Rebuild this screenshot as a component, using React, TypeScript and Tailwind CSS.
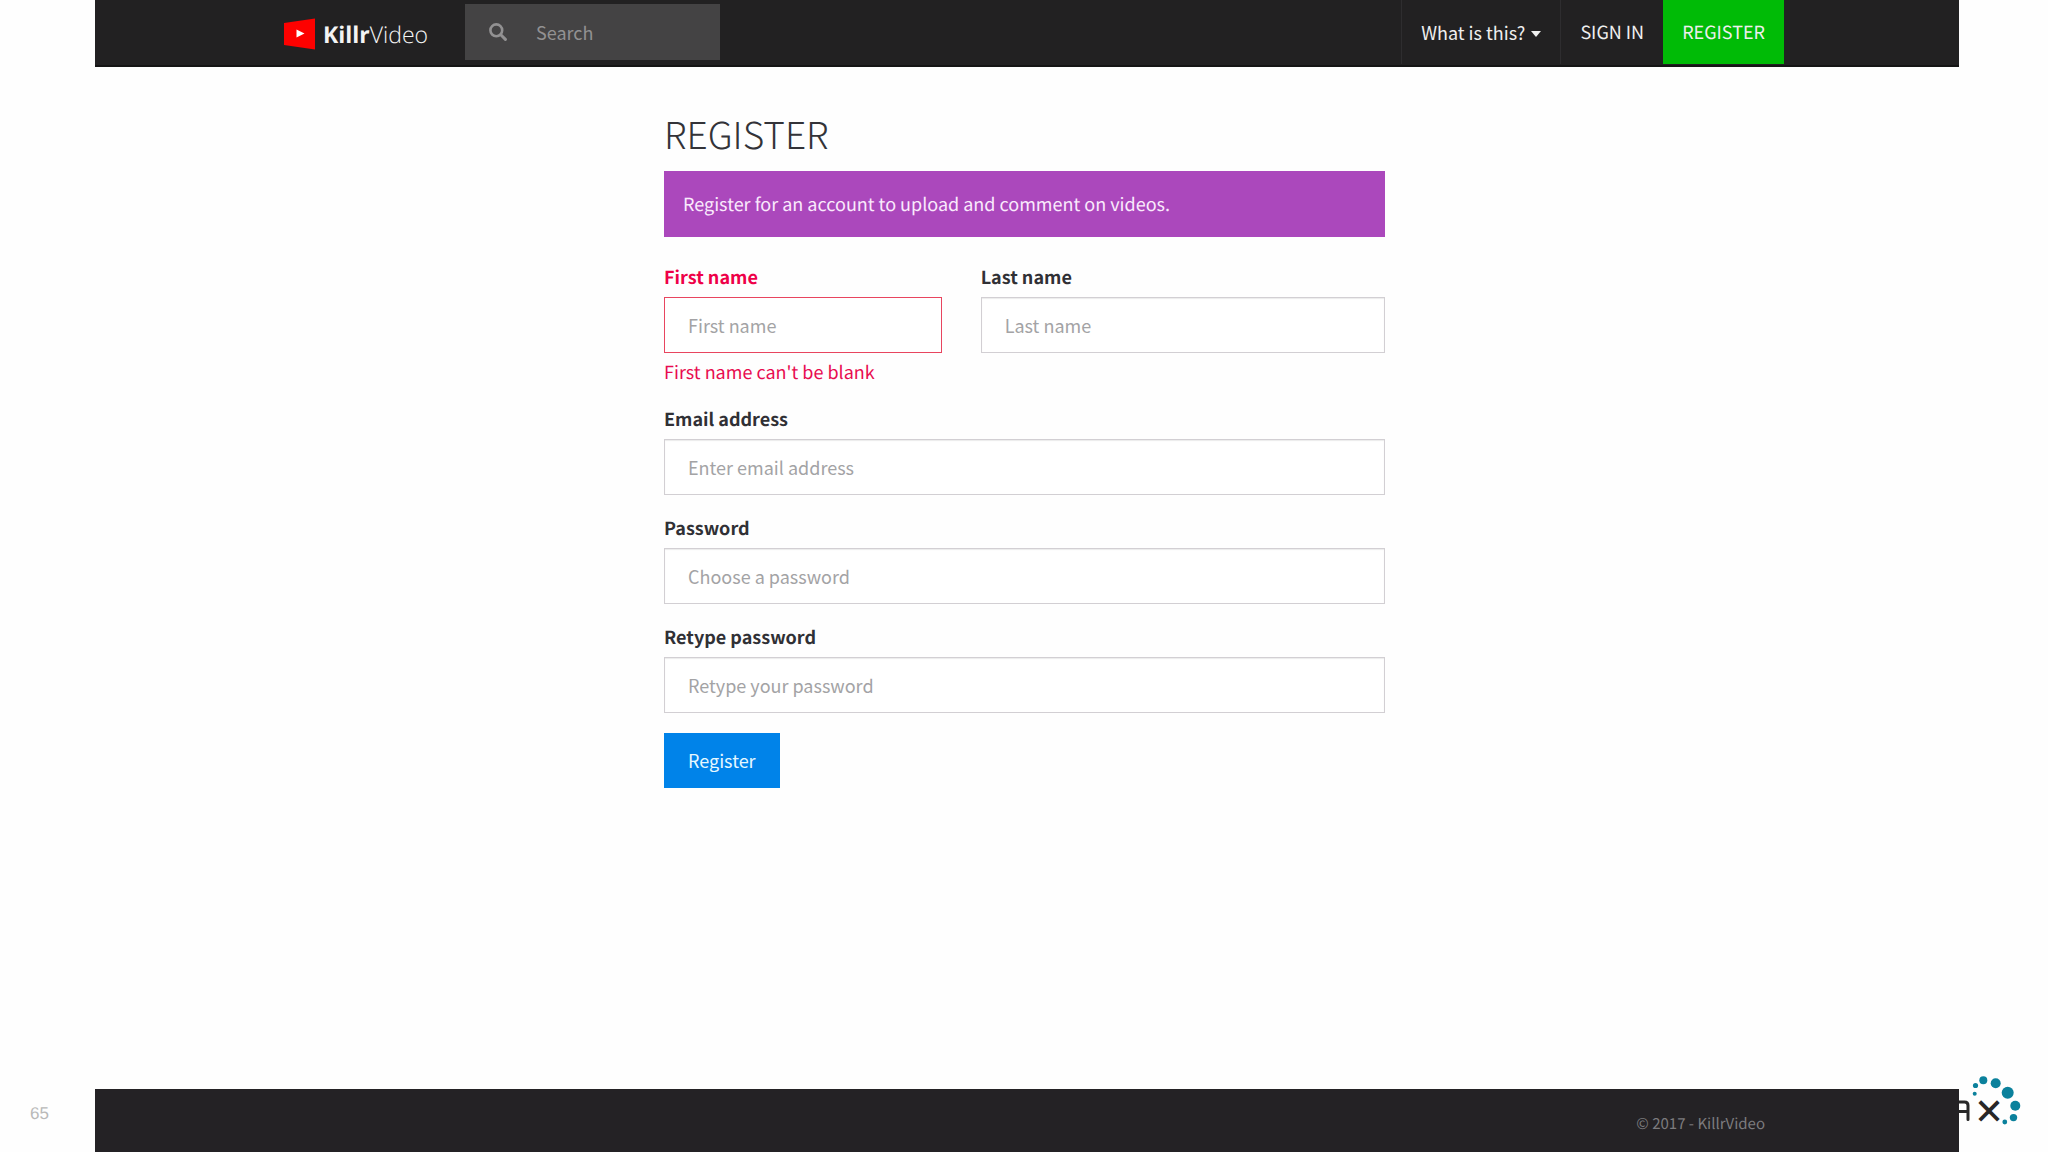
import React from "react";

const inputBase =
  "block h-14 w-full border bg-white px-[23px] text-[18px] leading-[26px] text-[#333] outline-none placeholder:text-[#a3a3a5] placeholder:opacity-100";

type FieldProps = {
  id: string;
  label: string;
  placeholder: string;
  type?: string;
  error?: string;
};

function Field({ id, label, placeholder, type = "text", error }: FieldProps) {
  return (
    <div className="mb-5">
      <label
        htmlFor={id}
        className={
          error
            ? "mb-[7px] block text-[18px] leading-[26px] font-bold text-[#ee0048]"
            : "mb-[7px] block text-[18px] leading-[26px] font-bold text-[#303035]"
        }
      >
        {label}
      </label>
      <input
        id={id}
        type={type}
        placeholder={placeholder}
        aria-invalid={error ? true : undefined}
        aria-describedby={error ? `${id}-error` : undefined}
        className={`${inputBase} ${
          error
            ? "border-[#e8455f]"
            : "border-[#d2cfd3] shadow-[inset_0_1px_1px_rgba(0,0,0,0.08)]"
        }`}
      />
      {error && (
        <p id={`${id}-error`} className="mt-1.5 mb-[21px] text-[18px] leading-[26px] text-[#e80c50]">
          {error}
        </p>
      )}
    </div>
  );
}

function KillrLogo() {
  return (
    <a href="#" className="flex h-full w-[182px] shrink-0 items-center gap-[7px] pt-[3px] text-[#f4f4f4]">
      <svg width="33" height="32" viewBox="0 0 33 32" aria-hidden="true">
        <path d="M1 5 32 0.5V31.5L1 27Z" fill="#fd0100" />
        <path d="M13.5 11.5 21.5 15.5 13.5 19.5Z" fill="#fff" />
      </svg>
      <span className="font-['Open_Sans',sans-serif] text-[23px] leading-8">
        <b className="font-bold">Killr</b>
        <span className="font-light">Video</span>
      </span>
    </a>
  );
}

function Header() {
  return (
    <header className="flex h-[67px] items-start border-b-2 border-[#151515] bg-[#222122] pr-[175px] pl-[188px]">
      <KillrLogo />
      <form role="search" className="mt-1 flex h-14 w-[255px] items-center bg-[#444344]">
        <label htmlFor="search" className="flex w-[71px] shrink-0 pl-6" aria-label="Search">
          <svg width="18" height="18" viewBox="0 0 18 18" fill="none" stroke="#929192" aria-hidden="true">
            <circle cx="7.3" cy="7.3" r="5.9" strokeWidth="2.6" />
            <path d="M11.8 11.8 16.4 16.4" strokeWidth="3" strokeLinecap="round" />
          </svg>
        </label>
        <input
          id="search"
          type="text"
          placeholder="Search"
          className="h-full w-full min-w-0 bg-transparent text-[18px] text-white outline-none placeholder:text-[#929192] placeholder:opacity-100"
        />
      </form>
      <nav className="ml-auto flex h-16 text-[18px] leading-[26px] text-[#efefef]">
        <button type="button" className="flex items-center gap-1.5 border-l border-[#2e2d2f] px-[19px] pb-px">
          What is this?
          <svg width="10" height="6" viewBox="0 0 10 6" fill="currentColor" className="mt-1" aria-hidden="true">
            <path d="M0 0H10L5 6Z" />
          </svg>
        </button>
        <a href="#" className="flex items-center border-l border-[#2e2d2f] px-[19px] pb-px">
          SIGN IN
        </a>
        <a href="#" className="flex items-center bg-[#00bb06] px-[19px] pb-px">
          REGISTER
        </a>
      </nav>
    </header>
  );
}

function PartnerLogo() {
  return (
    <div className="relative h-[76px] w-[89px] overflow-hidden">
      <svg width="89" height="76" viewBox="0 0 89 76" aria-hidden="true">
        <g fill="#0b819c">
          <circle cx="15.7" cy="17.7" r="2" />
          <circle cx="16.5" cy="9.5" r="2.6" />
          <circle cx="24.3" cy="4.2" r="4" />
          <circle cx="36.7" cy="7.2" r="5" />
          <circle cx="48.7" cy="16.8" r="6" />
          <circle cx="56.3" cy="29.7" r="5" />
          <circle cx="54.5" cy="41.6" r="3.7" />
          <circle cx="45.8" cy="46" r="2.4" />
        </g>
        <path
          d="M0 26H5.5Q9 26 9 29.5V43.5M0 35.5H9"
          fill="none"
          stroke="#272727"
          strokeWidth="3"
          strokeLinecap="round"
        />
      </svg>
      <span className="absolute top-4 left-[14px] w-8 text-center font-['Inter',sans-serif] text-[46px] leading-8 font-normal text-[#272727]">
        ×
      </span>
    </div>
  );
}

export default function App() {
  return (
    <div className="grid min-h-screen grid-cols-[95px_1fr_89px] bg-[#fefefe] font-['Noto_Sans_CJK_SC',sans-serif] [text-rendering:geometricPrecision]">
      <div className="flex items-end pb-[25px] pl-[30px]">
        <span className="font-['Liberation_Sans',sans-serif] text-[17px] leading-[26px] text-[#b9b9b9]">65</span>
      </div>

      <div className="flex min-w-0 flex-col">
        <Header />

        <main className="flex-1 pr-[5px]">
          <div className="mx-auto max-w-[721px] pt-10">
            <h1 className="mb-3 text-[37px] leading-[52px] font-light text-[#333338]">REGISTER</h1>
            <p className="mb-[27px] bg-[#ab48bc] px-[19px] py-5 text-[18px] leading-[26px] text-[#faeafc]">
              Register for an account to upload and comment on videos.
            </p>
            <form noValidate>
              <div className="grid grid-cols-12 gap-x-[39px]">
                <div className="col-span-5">
                  <Field
                    id="first-name"
                    label="First name"
                    placeholder="First name"
                    error="First name can't be blank"
                  />
                </div>
                <div className="col-span-7">
                  <Field id="last-name" label="Last name" placeholder="Last name" />
                </div>
              </div>
              <Field id="email" label="Email address" placeholder="Enter email address" type="email" />
              <Field id="password" label="Password" placeholder="Choose a password" type="password" />
              <Field id="retype" label="Retype password" placeholder="Retype your password" type="password" />
              <button type="button" className="h-[55px] bg-[#0083e9] px-6 pb-0.5 text-[18px] leading-[26px] text-[#e6f8ff]">
                Register
              </button>
            </form>
          </div>
        </main>

        <footer className="flex h-[63px] justify-end bg-[#242225] pt-[23px] pr-[194px] text-[15px] leading-6 text-[#7c7b7e]">
          © 2017 - KillrVideo
        </footer>
      </div>

      <div className="flex items-end">
        <PartnerLogo />
      </div>
    </div>
  );
}
